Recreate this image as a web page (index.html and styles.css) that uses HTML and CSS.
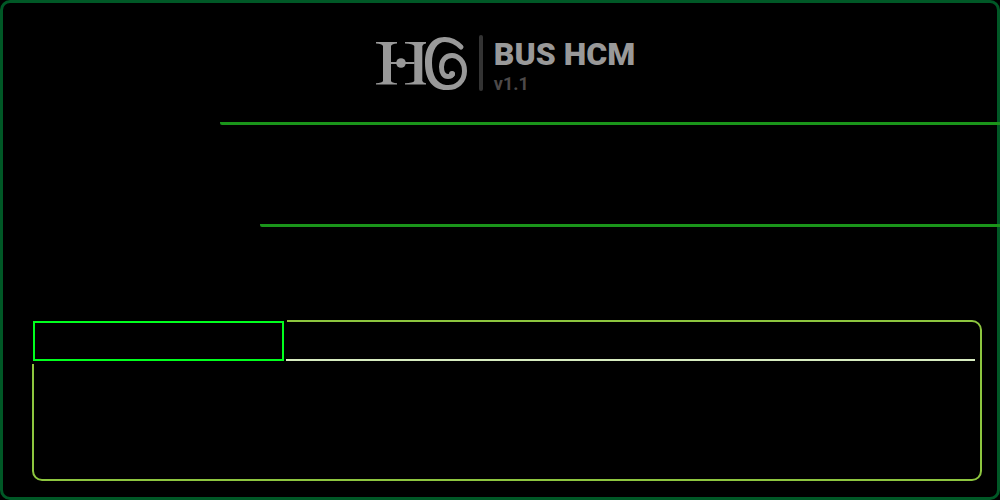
FILE: index.html
```
<!DOCTYPE html>
<html lang="en">
<head>
<meta charset="utf-8">
<title>BUS HCM</title>
<link rel="stylesheet" href="styles.css">
</head>
<body>
<main class="frame">
  <header class="brand">
    <svg class="logo" viewBox="0 0 92 54" role="img" aria-label="HG">
      <g fill="#999">
        <path d="M0 5H21V6.6Q16 7 15 9V44Q16 46 21 46.2V47.5H0V46.2Q6 46 7 44V9Q6 7 0 6.6Z"/>
        <path d="M29 5H50V6.6Q47 7 46.3 9V44Q47 46 50 46.2V47.5H29V46.2Q37 46 38.3 44V9Q37 7 29 6.6Z"/>
        <path d="M15 25H38.5V27H15Z"/>
        <circle cx="25" cy="26" r="4.8"/>
        <path d="M69 0C55 0 49 11 49 26C49 43 57 53 70 53L70 48C61 47 56 38 56 26C56 13 61 5 69 5Z"/>
        <circle cx="76" cy="37" r="3"/>
      </g>
      <g fill="none" stroke="#999" stroke-width="5" stroke-linecap="round">
        <path d="M85 10C80 5 75 2.500 69 2.500"/>
        <path d="M70 50.500C81 51.500 88.500 44 88.500 34C88.500 24 82 18.500 76 18.500C69 18.500 65.500 24 65.500 30C65.500 36 68 39.500 72 39.500C74.500 39.500 76 38.500 76.500 37"/>
      </g>
    </svg>
    <div class="divider"></div>
    <div class="title">
      <h1 class="name">BUS HCM</h1>
      <p class="version">v1.1</p>
    </div>
  </header>
  <div class="rule rule-first"></div>
  <div class="rule rule-second"></div>
  <section class="panel">
    <div class="panel-head">
      <div class="tab-slot"><div class="tab"></div></div>
      <div class="underline"></div>
    </div>
  </section>
</main>
</body>
</html>
```
FILE: styles.css
```
* {
  box-sizing: border-box;
}

body {
  margin: 0;
  background: #000;
  font-family: Roboto, "Liberation Sans", sans-serif;
}

.frame {
  display: flex;
  flex-direction: column;
  min-height: 100vh;
  padding: 32px 0 16px;
  border: 3px solid #005826;
  border-radius: 10px;
}

.brand {
  display: flex;
  justify-content: center;
  gap: 11px;
  height: 56px;
  padding-left: 11px;
}

.logo {
  width: 92px;
  height: 54px;
  margin-top: 2px;
}

.divider {
  width: 4px;
  border-radius: 2px;
  background: #333;
}

.title {
  padding-top: 1px;
}

.name,
.version {
  margin: 0;
}

.name {
  font-size: 32px;
  font-weight: 900;
  line-height: 37px;
  color: #999;
}

.version {
  font-size: 18px;
  font-weight: 700;
  line-height: 21px;
  color: #4d4949;
}

.rule {
  height: 3px;
  margin-right: -3px;
  background: #1a951a;
  border-bottom-left-radius: 2px;
}

.rule-first {
  margin-top: 31px;
  margin-left: 217px;
}

.rule-second {
  margin-top: 99px;
  margin-left: 257px;
}

.panel {
  flex: 1;
  margin: 93px 15px 0 29px;
  border: 2px solid #8dc63f;
  border-radius: 10px;
}

.panel-head {
  display: flex;
  margin: -2px 5px 0 -2px;
}

.tab-slot {
  width: 255px;
  padding: 1px 3px 3px 1px;
  background: #000;
}

.tab {
  height: 40px;
  border: 2px solid #00ff1e;
}

.underline {
  flex: 1;
  height: 2px;
  margin-top: 39px;
  margin-left: -1px;
  background: #d7ecc0;
}
```
